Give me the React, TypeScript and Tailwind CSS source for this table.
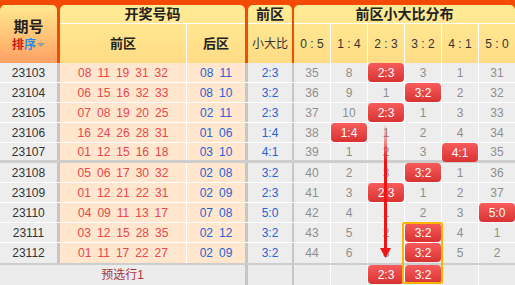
import React from 'react';

interface Row {
  issue: string;
  front: string[];
  back: string[];
  ratio: string;
  dist: (number | null)[];
  sep?: boolean;
}

const LABELS = ['0:5', '1:4', '2:3', '3:2', '4:1', '5:0'];

const rows: Row[] = [
  { issue: '23103', front: ['08', '11', '19', '31', '32'], back: ['08', '11'], ratio: '2:3', dist: [35, 8, null, 3, 1, 31] },
  { issue: '23104', front: ['06', '15', '16', '32', '33'], back: ['08', '10'], ratio: '3:2', dist: [36, 9, 1, null, 2, 32] },
  { issue: '23105', front: ['07', '08', '19', '20', '25'], back: ['02', '11'], ratio: '2:3', dist: [37, 10, null, 1, 3, 33] },
  { issue: '23106', front: ['16', '24', '26', '28', '31'], back: ['01', '06'], ratio: '1:4', dist: [38, null, 1, 2, 4, 34] },
  { issue: '23107', front: ['01', '12', '15', '16', '18'], back: ['03', '10'], ratio: '4:1', dist: [39, 1, 2, 3, null, 35], sep: true },
  { issue: '23108', front: ['05', '06', '17', '30', '32'], back: ['02', '08'], ratio: '3:2', dist: [40, 2, 3, null, 1, 36] },
  { issue: '23109', front: ['01', '12', '21', '22', '31'], back: ['02', '09'], ratio: '2:3', dist: [41, 3, null, 1, 2, 37] },
  { issue: '23110', front: ['04', '09', '11', '13', '17'], back: ['07', '08'], ratio: '5:0', dist: [42, 4, 1, 2, 3, null] },
  { issue: '23111', front: ['03', '12', '15', '28', '35'], back: ['02', '12'], ratio: '3:2', dist: [43, 5, 2, null, 4, 1] },
  { issue: '23112', front: ['01', '11', '17', '22', '27'], back: ['02', '09'], ratio: '3:2', dist: [44, 6, 3, null, 5, 2] },
];

const distWidth = ['w-[37px]', 'w-[37px]', 'w-[37px]', 'w-[37px]', 'w-[37px]', 'w-[36px] border-r-0'];

const Badge = ({ text }: { text: string }) => (
  <div className="absolute left-0 right-0 top-0 h-[19px] rounded-[4px] bg-linear-to-b from-[#f75a5a] to-[#d83232] text-white flex items-center justify-center text-[12px]">
    {text}
  </div>
);

const headCell = 'bg-linear-to-b from-[#ffec96] to-[#ffdc85] rounded-t-[5px]';

const App = () => {
  return (
    <div className="relative w-[515px] h-[285px] overflow-hidden bg-white font-['Liberation_Sans','Noto_Sans_CJK_SC',sans-serif] text-[12px] text-[#333]">
      {/* header */}
      <div className="flex h-[63px] bg-[#f34a05] pt-[5px]">
        <div className="w-[57px] rounded-t-[5px] bg-linear-to-b from-[#ffe98f] to-[#ffa062] flex flex-col items-center justify-center pt-[2px]">
          <span className="text-[15px] font-bold text-[#222] leading-[18px]">期号</span>
          <span className="flex items-center text-[12px] font-bold leading-[16px] mt-[1px]">
            <span className="text-[#c81818]">排</span>
            <span className="text-[#1c8cf0]">序</span>
            <span className="ml-[1px] border-x-[4px] border-t-[4px] border-x-transparent border-t-[#9a9a9a]" />
          </span>
        </div>
        <div className={`ml-[3px] w-[185px] flex flex-col ${headCell}`}>
          <div className="h-[19px] border-b border-white flex items-center justify-center text-[14px] font-bold text-[#222]">
            开奖号码
          </div>
          <div className="flex flex-1 text-[13px] font-bold text-[#222]">
            <div className="w-[127px] border-r border-white flex items-center justify-center">前区</div>
            <div className="flex-1 flex items-center justify-center">后区</div>
          </div>
        </div>
        <div className={`ml-[3px] w-[44px] flex flex-col ${headCell}`}>
          <div className="h-[19px] border-b border-white flex items-center justify-center text-[14px] font-bold text-[#222]">
            前区
          </div>
          <div className="flex-1 flex items-center justify-center text-[12px] text-[#333]">小大比</div>
        </div>
        <div className={`ml-[2px] flex-1 flex flex-col ${headCell}`}>
          <div className="h-[19px] border-b border-white flex items-center justify-center text-[14px] font-bold text-[#222]">
            前区小大比分布
          </div>
          <div className="flex flex-1">
            {LABELS.map((l, i) => (
              <div
                key={l}
                className={`${distWidth[i]} border-r border-white flex items-center justify-center text-[12px] text-[#333] whitespace-pre`}
              >
                {l.replace(':', ' : ')}
              </div>
            ))}
          </div>
        </div>
      </div>

      {/* body */}
      {rows.map((r, idx) => {
        const last = idx === rows.length - 1;
        const border = r.sep
          ? 'h-[20px] border-b-[3px] border-b-[#cdcdcd]'
          : last
          ? 'h-[22px] border-b-2 border-b-[#cdcdcd]'
          : 'h-[20px] border-b border-b-white';
        return (
          <div key={r.issue} className={`flex ${border}`}>
            <div className="w-[60px] border-r-[3px] border-r-[#c6c6c6] bg-[#eeeded] flex items-center justify-center text-[#333]">
              {r.issue}
            </div>
            <div className="w-[127px] border-r border-r-white bg-[#ffe6cd] flex items-center justify-center gap-[6px] text-[#e8474c]">
              {r.front.map((n, i) => (
                <span key={i}>{n}</span>
              ))}
            </div>
            <div className="w-[61px] border-r-[3px] border-r-[#c6c6c6] bg-[#ffe6cd] flex items-center justify-center gap-[6px] text-[#2563d6]">
              {r.back.map((n, i) => (
                <span key={i}>{n}</span>
              ))}
            </div>
            <div className="w-[46px] border-r-2 border-r-[#c6c6c6] bg-[#eeeded] flex items-center justify-center text-[#2563d6]">
              {r.ratio}
            </div>
            {r.dist.map((d, i) => (
              <div
                key={i}
                className={`${distWidth[i]} relative border-r border-r-white bg-[#eeeded] flex items-center justify-center text-[#8e8e8e]`}
              >
                {d === null ? <Badge text={LABELS[i]} /> : d}
              </div>
            ))}
          </div>
        );
      })}

      {/* preview row */}
      <div className="flex h-[20px]">
        <div className="w-[248px] border-r-[3px] border-r-[#c6c6c6] bg-[#ececec] flex items-center justify-center text-[#a83434]">
          预选行1
        </div>
        <div className="w-[46px] border-r-2 border-r-[#c6c6c6] bg-[#ececec]" />
        {LABELS.map((l, i) => (
          <div key={l} className={`${distWidth[i]} relative border-r border-r-white bg-[#ececec]`}>
            {(i === 2 || i === 3) && <Badge text={l} />}
          </div>
        ))}
      </div>

      {/* annotations */}
      <div className="absolute left-[384px] top-[124px] w-[3px] h-[126px] bg-linear-to-b from-[#ff000000] via-[#f01515] via-30% to-[#f01515]" />
      <svg className="absolute left-[380px] top-[248px]" width="11" height="10" viewBox="0 0 11 10">
        <polygon points="0,0 11,0 5.5,10" fill="#f01515" />
      </svg>
      <div className="absolute left-[402px] top-[222px] w-[41px] h-[62px] border-2 border-[#ffb400] rounded-[2px]" />
    </div>
  );
};

export default App;
